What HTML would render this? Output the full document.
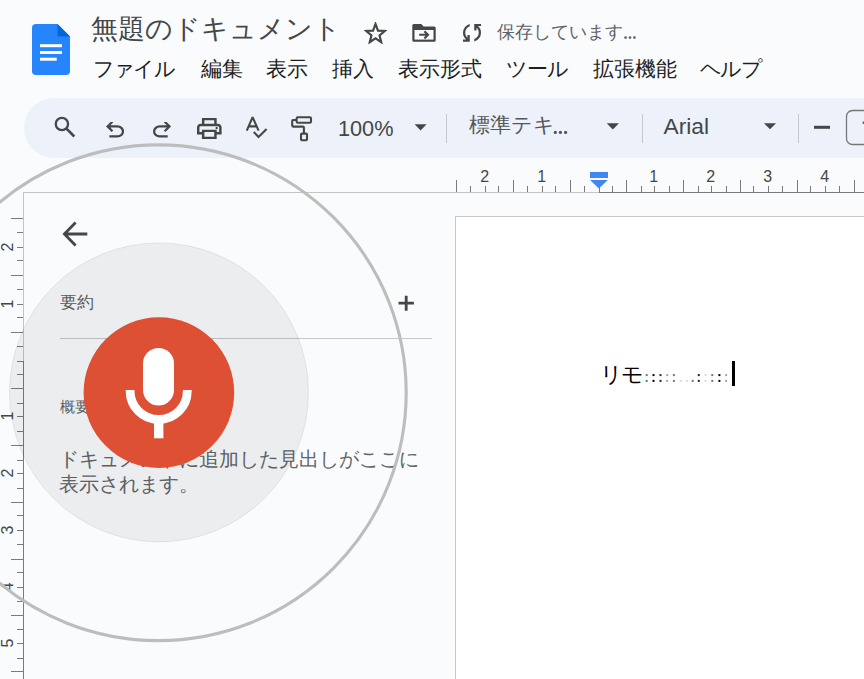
<!DOCTYPE html>
<html lang="ja">
<head>
<meta charset="utf-8">
<style>
html,body{margin:0;padding:0;}
body{width:864px;height:679px;overflow:hidden;position:relative;background:#f9fbfd;font-family:"Liberation Sans",sans-serif;color:#1f1f1f;}
.a{position:absolute;white-space:nowrap;}
.menu{font-size:21px;color:#1f1f1f;top:55px;line-height:28px;}
.tb{left:24px;top:98px;width:900px;height:60px;border-radius:30px;background:#edf2fa;}
.sep{width:1px;background:#c7c7c7;top:114px;height:29px;}
.rn{font-size:16px;line-height:20px;width:20px;text-align:center;color:#444746}
.rv{transform:rotate(-90deg)}
</style>
</head>
<body>
<!-- docs logo -->
<svg class="a" style="left:32px;top:24px" width="38" height="51" viewBox="0 0 38 51">
  <path d="M4 0 H25.5 L38 12.5 V47 a4 4 0 0 1 -4 4 H4 a4 4 0 0 1 -4 -4 V4 a4 4 0 0 1 4 -4z" fill="#2684fc"/>
  <path d="M25.5 0 L38 12.5 H25.5z" fill="#0066da"/>
  <rect x="8" y="20.2" width="22" height="3" fill="#fff"/>
  <rect x="8" y="27" width="22" height="3" fill="#fff"/>
  <rect x="8" y="33.7" width="16.7" height="3" fill="#fff"/>
</svg>
<div class="a" style="left:91px;top:12px;font-size:27px;line-height:34px;color:#444746">無題のドキュメント</div>

<!-- star -->
<svg class="a" style="left:364.1px;top:21.6px" width="23" height="22" viewBox="0 0 24 22" preserveAspectRatio="none">
  <path d="M12 2 L14.6 8.6 L21.6 9 L16.2 13.4 L18 20.2 L12 16.4 L6 20.2 L7.8 13.4 L2.4 9 L9.4 8.6z" fill="none" stroke="#444746" stroke-width="2.2" stroke-linejoin="miter"/>
</svg>
<!-- folder move -->
<svg class="a" style="left:0;top:0" width="500" height="60">
  <path d="M413.8 24 H421.3 L423.7 26.4 H434.2 Q435.7 26.4 435.7 27.9 V40.3 Q435.7 41.8 434.2 41.8 H413.8 Q412.3 41.8 412.3 40.3 V25.5 Q412.3 24 413.8 24 Z" fill="#444746"/>
  <rect x="414.5" y="30" width="19" height="9.6" fill="#f9fbfd"/>
  <path d="M419.2 34.8 H427.6 M424.4 31.2 L428 34.8 L424.4 38.4" fill="none" stroke="#444746" stroke-width="2.1"/>
</svg>
<!-- sync -->
<svg class="a" style="left:463px;top:24.2px" width="18" height="17.7" viewBox="160 -790 640 630" preserveAspectRatio="none"><path fill="#444746" d="M160-160v-80h110l-16-14q-52-46-73-105t-21-119q0-111 66.5-197.5T400-790v84q-72 26-116 88.5T240-478q0 45 17 87.5t53 78.5l10 10v-98h80v240H160Zm400-10v-84q72-26 116-88.5T720-482q0-45-17-87.5T650-648l-10-10v98h-80v-240h240v80H690l16 14q49 49 71.5 106.5T800-482q0 111-66.5 197.5T560-170Z"/></svg>
<div class="a" style="left:497px;top:20px;font-size:18px;line-height:24px;color:#5f6368">保存しています</div>
<svg class="a" style="left:0;top:0" width="864" height="60"><g fill="#5f6368"><circle cx="625.6" cy="37.6" r="1.35"/><circle cx="630" cy="37.6" r="1.35"/><circle cx="634.4" cy="37.6" r="1.35"/></g></svg>

<!-- menu -->
<div class="a menu" style="left:92.5px;letter-spacing:-1.6px">ファイル</div>
<div class="a menu" style="left:201px">編集</div>
<div class="a menu" style="left:265.7px">表示</div>
<div class="a menu" style="left:332.4px">挿入</div>
<div class="a menu" style="left:397.6px">表示形式</div>
<div class="a menu" style="left:505.5px;letter-spacing:-0.6px">ツール</div>
<div class="a menu" style="left:592.6px">拡張機能</div>
<div class="a menu" style="left:699.5px;letter-spacing:-1.2px">ヘルプ</div>

<!-- toolbar -->
<div class="a tb"></div>
<svg class="a" style="left:0;top:0" width="100" height="160"><circle cx="61.9" cy="124" r="6.15" fill="none" stroke="#444746" stroke-width="2.3"/><path d="M66.2 128.3 L74.3 136.5" stroke="#444746" stroke-width="2.6"/></svg>
<svg class="a" style="left:106.3px;top:122.1px" width="18.1" height="15.5" viewBox="160 -760 640 560" preserveAspectRatio="none"><path fill="#444746" d="M280-200v-80h284q63 0 109.5-40T720-420q0-60-46.5-100T564-560H312l104 104-56 56-200-200 200-200 56 56-104 104h252q97 0 166.5 63T800-420q0 94-69.5 157T564-200H280Z"/></svg>
<svg class="a" style="left:153px;top:122.1px" width="18.1" height="15.5" viewBox="160 -760 640 560" preserveAspectRatio="none"><path fill="#444746" d="M396-200q-97 0-166.5-63T160-420q0-94 69.5-157T396-640h252L544-744l56-56 200 200-200 200-56-56 104-104H396q-63 0-109.5 40T240-420q0 60 46.5 100T396-280h284v80H396Z"/></svg>
<svg class="a" style="left:197px;top:117.5px" width="24.6" height="21.1" viewBox="80 -840 800 720" preserveAspectRatio="none"><path fill="#444746" d="M640-640v-120H320v120h-80v-200h480v200h-80Zm-480 80h640-640Zm560 100q17 0 28.5-11.5T760-500q0-17-11.5-28.5T720-540q-17 0-28.5 11.5T680-500q0 17 11.5 28.5T720-460Zm-80 260v-160H320v160h320Zm80 80H240v-160H80v-240q0-51 35-85.5t85-34.5h560q51 0 85.5 34.5T880-520v240H720v160Zm80-240v-160q0-17-11.5-28.5T760-560H200q-17 0-28.5 11.5T160-520v160h80v-80h480v80h80Z"/></svg>
<svg class="a" style="left:0;top:0" width="864" height="679" viewBox="0 0 864 679">
  <g fill="none" stroke="#444746" stroke-width="2.1">
    <path d="M246.8 130.6 L252.6 117.2 L258.6 130.6 M249.1 126.4 H256.3" stroke-linejoin="bevel"/>
    <path d="M253.8 132 L258.5 137 L266.6 129"/>
    <rect x="296.6" y="117.2" width="14.4" height="5.6" rx="1.2"/>
    <path d="M296.6 120 H293.2 a1 1 0 0 0 -1 1 V125.6 a1 1 0 0 0 1 1 H302.9 a1 1 0 0 1 1 1 V133.6"/>
    <rect x="301" y="133.6" width="6" height="6.6" rx="1"/>
  </g>
  <path d="M414.6 124.2 H426.6 L420.6 130.6z" fill="#444746"/>
  <path d="M606.7 123.3 H619 L612.85 129.6z" fill="#444746"/>
  <path d="M764 123.3 H776 L770 129.3z" fill="#444746"/>
  <rect x="814" y="125.8" width="16" height="3" fill="#444746"/>
  <rect x="862.6" y="121.5" width="1.4" height="2.5" fill="#666"/>
  <rect x="846.5" y="110.5" width="30" height="34" rx="6" fill="none" stroke="#747775" stroke-width="1.3"/>
</svg>
<div class="a" style="left:338px;top:114.8px;font-size:21.7px;line-height:28px;color:#444746">100%</div>
<div class="a sep" style="left:446px"></div>
<div class="a" style="left:469px;top:111px;font-size:20.5px;line-height:28px;color:#54575a">標準テキ</div>
<svg class="a" style="left:0;top:100px" width="864" height="60"><g fill="#54575a"><circle cx="555.3" cy="32.4" r="1.6"/><circle cx="560.4" cy="32.4" r="1.6"/><circle cx="565.6" cy="32.4" r="1.6"/></g></svg>
<div class="a sep" style="left:642px"></div>
<div class="a" style="left:663.5px;top:111.7px;font-size:22.8px;line-height:28px;color:#444746">Arial</div>
<div class="a sep" style="left:798px"></div>
<svg class="a" style="left:0;top:0" width="864" height="679" viewBox="0 0 864 679" shape-rendering="crispEdges">
<rect x="23" y="192" width="576" height="1" fill="#c4c4c4"/>
<rect x="599" y="192" width="265" height="1" fill="#7b7b7b"/>
<rect x="23" y="192" width="1" height="169" fill="#c4c4c4"/>
<rect x="23" y="361" width="1" height="318" fill="#7b7b7b"/>
<rect x="456" y="180" width="1" height="12" fill="#7b7b7b"/>
<rect x="470" y="186" width="1" height="6" fill="#7b7b7b"/>
<rect x="485" y="186" width="1" height="6" fill="#7b7b7b"/>
<rect x="498" y="186" width="1" height="6" fill="#7b7b7b"/>
<rect x="513" y="180" width="1" height="12" fill="#7b7b7b"/>
<rect x="527" y="186" width="1" height="6" fill="#7b7b7b"/>
<rect x="542" y="186" width="1" height="6" fill="#7b7b7b"/>
<rect x="555" y="186" width="1" height="6" fill="#7b7b7b"/>
<rect x="570" y="180" width="1" height="12" fill="#7b7b7b"/>
<rect x="584" y="186" width="1" height="6" fill="#7b7b7b"/>
<rect x="599" y="186" width="1" height="6" fill="#7b7b7b"/>
<rect x="612" y="186" width="1" height="6" fill="#7b7b7b"/>
<rect x="626" y="180" width="1" height="12" fill="#7b7b7b"/>
<rect x="641" y="186" width="1" height="6" fill="#7b7b7b"/>
<rect x="654" y="186" width="1" height="6" fill="#7b7b7b"/>
<rect x="669" y="186" width="1" height="6" fill="#7b7b7b"/>
<rect x="683" y="180" width="1" height="12" fill="#7b7b7b"/>
<rect x="698" y="186" width="1" height="6" fill="#7b7b7b"/>
<rect x="711" y="186" width="1" height="6" fill="#7b7b7b"/>
<rect x="726" y="186" width="1" height="6" fill="#7b7b7b"/>
<rect x="740" y="180" width="1" height="12" fill="#7b7b7b"/>
<rect x="753" y="186" width="1" height="6" fill="#7b7b7b"/>
<rect x="768" y="186" width="1" height="6" fill="#7b7b7b"/>
<rect x="782" y="186" width="1" height="6" fill="#7b7b7b"/>
<rect x="797" y="180" width="1" height="12" fill="#7b7b7b"/>
<rect x="810" y="186" width="1" height="6" fill="#7b7b7b"/>
<rect x="825" y="186" width="1" height="6" fill="#7b7b7b"/>
<rect x="839" y="186" width="1" height="6" fill="#7b7b7b"/>
<rect x="854" y="180" width="1" height="12" fill="#7b7b7b"/>
<rect x="11" y="218" width="12" height="1" fill="#7b7b7b"/>
<rect x="17" y="232" width="6" height="1" fill="#7b7b7b"/>
<rect x="17" y="247" width="6" height="1" fill="#7b7b7b"/>
<rect x="17" y="260" width="6" height="1" fill="#7b7b7b"/>
<rect x="11" y="275" width="12" height="1" fill="#7b7b7b"/>
<rect x="17" y="289" width="6" height="1" fill="#7b7b7b"/>
<rect x="17" y="304" width="6" height="1" fill="#7b7b7b"/>
<rect x="17" y="317" width="6" height="1" fill="#7b7b7b"/>
<rect x="11" y="332" width="12" height="1" fill="#7b7b7b"/>
<rect x="17" y="346" width="6" height="1" fill="#7b7b7b"/>
<rect x="17" y="361" width="6" height="1" fill="#7b7b7b"/>
<rect x="17" y="374" width="6" height="1" fill="#7b7b7b"/>
<rect x="11" y="388" width="12" height="1" fill="#7b7b7b"/>
<rect x="17" y="403" width="6" height="1" fill="#7b7b7b"/>
<rect x="17" y="416" width="6" height="1" fill="#7b7b7b"/>
<rect x="17" y="431" width="6" height="1" fill="#7b7b7b"/>
<rect x="11" y="445" width="12" height="1" fill="#7b7b7b"/>
<rect x="17" y="460" width="6" height="1" fill="#7b7b7b"/>
<rect x="17" y="473" width="6" height="1" fill="#7b7b7b"/>
<rect x="17" y="488" width="6" height="1" fill="#7b7b7b"/>
<rect x="11" y="502" width="12" height="1" fill="#7b7b7b"/>
<rect x="17" y="515" width="6" height="1" fill="#7b7b7b"/>
<rect x="17" y="530" width="6" height="1" fill="#7b7b7b"/>
<rect x="17" y="544" width="6" height="1" fill="#7b7b7b"/>
<rect x="11" y="559" width="12" height="1" fill="#7b7b7b"/>
<rect x="17" y="572" width="6" height="1" fill="#7b7b7b"/>
<rect x="17" y="587" width="6" height="1" fill="#7b7b7b"/>
<rect x="17" y="601" width="6" height="1" fill="#7b7b7b"/>
<rect x="11" y="615" width="12" height="1" fill="#7b7b7b"/>
<rect x="17" y="629" width="6" height="1" fill="#7b7b7b"/>
<rect x="17" y="643" width="6" height="1" fill="#7b7b7b"/>
<rect x="17" y="658" width="6" height="1" fill="#7b7b7b"/>
<rect x="11" y="671" width="12" height="1" fill="#7b7b7b"/>
</svg>
<div class="a rn" style="left:474.8px;top:167px">2</div>
<div class="a rn" style="left:531.8px;top:167px">1</div>
<div class="a rn" style="left:643.8px;top:167px">1</div>
<div class="a rn" style="left:700.8px;top:167px">2</div>
<div class="a rn" style="left:757.8px;top:167px">3</div>
<div class="a rn" style="left:814.8px;top:167px">4</div>
<div class="a rn rv" style="left:-2.4px;top:237.0px">2</div>
<div class="a rn rv" style="left:-2.4px;top:294.0px">1</div>
<div class="a rn rv" style="left:-2.4px;top:406.0px">1</div>
<div class="a rn rv" style="left:-2.4px;top:463.0px">2</div>
<div class="a rn rv" style="left:-2.4px;top:520.0px">3</div>
<div class="a rn rv" style="left:-2.4px;top:577.0px">4</div>
<div class="a rn rv" style="left:-2.4px;top:633.0px">5</div>
<svg class="a" style="left:0;top:0" width="864" height="679"><rect x="590" y="172" width="18" height="6" fill="#4285f4"/><path d="M590 180 H607.8 L598.9 188.5z" fill="#4285f4"/></svg>
<div class="a" style="left:455px;top:216px;width:420px;height:470px;background:#fff;border:1px solid #c7c7c7;box-sizing:border-box"></div>
<svg class="a" style="left:0;top:0" width="864" height="679">
<path d="M65 234 H87.3 M75.6 222.6 L64.4 234 L75.6 245.4" fill="none" stroke="#444746" stroke-width="2.8"/>
<path d="M398.5 303.2 H413.9 M406.2 295.8 V310.7" stroke="#444746" stroke-width="2.8"/>
<rect x="60" y="338" width="372" height="1" fill="#c7c7c7"/>
</svg>
<div class="a" style="left:60px;top:291px;font-size:17px;line-height:24px;color:#5f6368">要約</div>
<div class="a" style="left:59.5px;top:395.5px;font-size:15px;line-height:22px;color:#5f6368">概要</div>
<div class="a" style="left:59px;top:447px;font-size:20px;line-height:25px;color:#62666a">ドキュメントに追加した見出しがここに<br>表示されます。</div>
<div class="a" style="left:599.5px;top:362px;font-size:21.5px;line-height:26px;color:#000;letter-spacing:-1.5px">リモ</div>
<svg class="a" style="left:0;top:0" width="864" height="679">
<rect x="645.7" y="374.1" width="2" height="2" fill="rgba(0,0,0,0.55)"/>
<rect x="645.7" y="379.9" width="2" height="2" fill="rgba(0,0,0,0.55)"/>
<rect x="652.5" y="374.1" width="2" height="2" fill="rgba(0,0,0,1)"/>
<rect x="652.5" y="379.9" width="2" height="2" fill="rgba(0,0,0,1)"/>
<rect x="659.5" y="374.1" width="2" height="2" fill="rgba(0,0,0,0.85)"/>
<rect x="659.5" y="379.9" width="2" height="2" fill="rgba(0,0,0,0.85)"/>
<rect x="666.2" y="374.1" width="2" height="2" fill="rgba(0,0,0,0.35)"/>
<rect x="666.2" y="379.9" width="2" height="2" fill="rgba(0,0,0,0.35)"/>
<rect x="672.9" y="374.1" width="2" height="2" fill="rgba(0,0,0,0.55)"/>
<rect x="672.9" y="379.9" width="2" height="2" fill="rgba(0,0,0,0.55)"/>
<rect x="679.7" y="379.9" width="2" height="2" fill="rgba(0,0,0,0.15)"/>
<rect x="685.9" y="379.9" width="2" height="2" fill="rgba(0,0,0,0.15)"/>
<rect x="691.7" y="379.9" width="2" height="2" fill="rgba(0,0,0,0.55)"/>
<rect x="697.8" y="374.1" width="2" height="2" fill="rgba(0,0,0,0.85)"/>
<rect x="697.8" y="379.9" width="2" height="2" fill="rgba(0,0,0,0.85)"/>
<rect x="704.6" y="374.1" width="2" height="2" fill="rgba(0,0,0,0.15)"/>
<rect x="704.6" y="379.9" width="2" height="2" fill="rgba(0,0,0,0.15)"/>
<rect x="711.3" y="374.1" width="2" height="2" fill="rgba(0,0,0,0.55)"/>
<rect x="711.3" y="379.9" width="2" height="2" fill="rgba(0,0,0,0.55)"/>
<rect x="718.4" y="374.1" width="2" height="2" fill="rgba(0,0,0,1)"/>
<rect x="718.4" y="379.9" width="2" height="2" fill="rgba(0,0,0,1)"/>
<rect x="725.1" y="374.1" width="2" height="2" fill="rgba(0,0,0,0.35)"/>
<rect x="725.1" y="379.9" width="2" height="2" fill="rgba(0,0,0,0.35)"/>
</svg>
<div class="a" style="left:732px;top:361px;width:2.6px;height:24.5px;background:#000"></div>
<svg class="a" style="left:0;top:0" width="864" height="679">
<circle cx="159" cy="392.4" r="149.5" fill="rgba(0,0,0,0.055)" stroke="rgba(0,0,0,0.08)" stroke-width="1"/>
<circle cx="158.3" cy="392.75" r="247.9" fill="none" stroke="#bdbdbd" stroke-width="3.1"/>
<circle cx="158.9" cy="392.6" r="75.3" fill="#dd5034"/>
<rect x="143" y="348" width="31" height="57.5" rx="15.5" fill="#fff"/>
<path d="M130.1 390 V390.9 A28.6 28.6 0 0 0 187.3 390.9 V390" fill="none" stroke="#fff" stroke-width="8.8"/>
<rect x="154" y="416" width="9.4" height="22.3" fill="#fff"/>
</svg>
</body>
</html>
